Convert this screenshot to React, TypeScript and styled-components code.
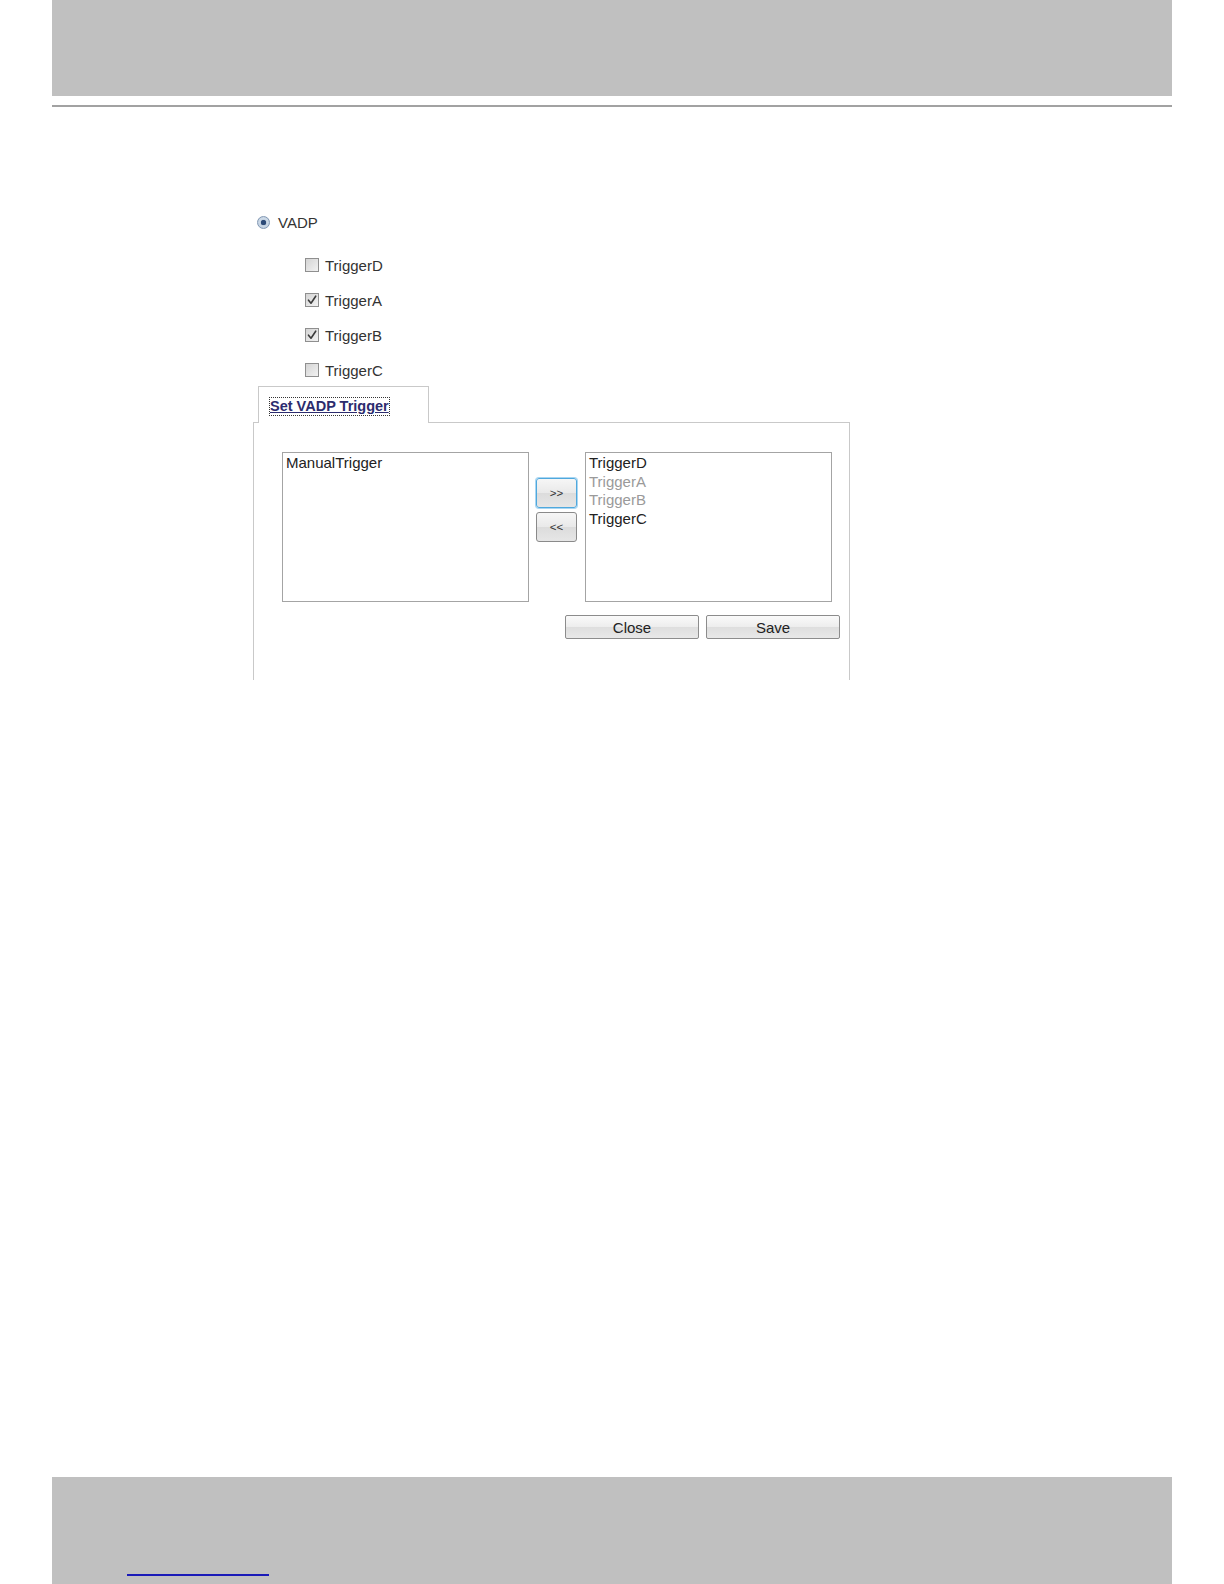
import React from "react";
import styled, { createGlobalStyle } from "styled-components";

const Global = createGlobalStyle`
  html, body { margin: 0; padding: 0; background: #ffffff; }
  body { font-family: "Liberation Sans", Arial, sans-serif; }
`;

const Page = styled.div`
  width: 1224px;
  height: 1584px;
  display: flex;
  flex-direction: column;
  position: relative;
`;

const HeaderBand = styled.div`
  margin: 0 52px;
  height: 96px;
  background: #c0c0c0;
`;

const Rule = styled.div`
  margin: 9px 52px 0;
  height: 2px;
  background: #a2a2a2;
`;

const Content = styled.div`
  padding-left: 256px;
  margin-top: 105px;
  display: flex;
  flex-direction: column;
`;

const OptionRow = styled.label<{ $indent?: number }>`
  display: flex;
  align-items: center;
  height: 20px;
  gap: 6px;
  padding-left: ${(p) => p.$indent ?? 0}px;
  font-size: 15px;
  color: #333;
`;

const RadioDot = styled.span`
  width: 13px;
  height: 13px;
  border-radius: 50%;
  box-sizing: border-box;
  border: 1px solid #8298b4;
  background: radial-gradient(circle at 50% 45%, #e2ecf6 0%, #b4c5d8 100%);
  display: flex;
  align-items: center;
  justify-content: center;
  margin-left: 1px;
  margin-right: 2px;
  &::after {
    content: "";
    width: 5px;
    height: 5px;
    border-radius: 50%;
    background: #2c4a78;
    box-shadow: 0 0 1px #1b3560;
  }
`;

const CheckList = styled.div`
  display: flex;
  flex-direction: column;
  gap: 15px;
  margin-top: 23px;
`;

const CheckBox = styled.span`
  width: 14px;
  height: 14px;
  box-sizing: border-box;
  border: 1px solid #8f8f8f;
  background: linear-gradient(135deg, #d4d4d4 0%, #f2f2f2 100%);
  display: flex;
  align-items: center;
  justify-content: center;
`;

const TabStrip = styled.div`
  margin-top: 6px;
  margin-left: -3px;
  display: flex;
  flex-direction: column;
`;

const Tab = styled.div`
  margin-left: 5px;
  width: 171px;
  height: 37px;
  box-sizing: border-box;
  border: 1px solid #c9c9c9;
  border-bottom: none;
  background: #fff;
  margin-bottom: -1px;
  position: relative;
  z-index: 1;
  padding: 10px 0 0 11px;
`;

const TabLabel = styled.span`
  font-size: 14.5px;
  font-weight: bold;
  color: #2c2c6e;
  text-decoration: underline;
  outline: 1px dotted #333;
  outline-offset: 0px;
  line-height: 17px;
  display: inline-block;
`;

const Panel = styled.div`
  width: 597px;
  height: 258px;
  box-sizing: border-box;
  border: 1px solid #c9c9c9;
  border-bottom: none;
  padding: 29px 0 0 28px;
  display: flex;
  flex-direction: column;
`;

const ListRow = styled.div`
  display: flex;
  align-items: flex-start;
`;

const ListBox = styled.div`
  width: 247px;
  height: 150px;
  box-sizing: border-box;
  border: 1px solid #a4a4a4;
  background: #fff;
  padding: 1px 3px;
  display: flex;
  flex-direction: column;
`;

const ListItem = styled.div<{ $disabled?: boolean }>`
  font-size: 15px;
  line-height: 18.6px;
  color: ${(p) => (p.$disabled ? "#9a9a9a" : "#222")};
  white-space: nowrap;
`;

const MoveColumn = styled.div`
  display: flex;
  flex-direction: column;
  gap: 4px;
  margin: 26px 8px 0 7px;
`;

const MoveButton = styled.button<{ $focused?: boolean }>`
  width: 41px;
  height: 30px;
  box-sizing: border-box;
  border-radius: 3px;
  border: 1px solid ${(p) => (p.$focused ? "#4fa8dd" : "#8a8a8a")};
  box-shadow: ${(p) => (p.$focused ? "0 0 0 1px #a9d6f2" : "none")};
  background: linear-gradient(#f6f6f6 0%, #e9e9e9 50%, #dcdcdc 51%, #e6e6e6 100%);
  font-family: "Liberation Sans", Arial, sans-serif;
  font-size: 11.5px;
  color: #333;
  padding: 0;
  display: flex;
  align-items: center;
  justify-content: center;
`;

const ActionRow = styled.div`
  display: flex;
  gap: 7px;
  margin-top: 13px;
  padding-left: 283px;
`;

const ActionButton = styled.button`
  width: 134px;
  height: 24px;
  box-sizing: border-box;
  border: 1px solid #8c8c8c;
  border-radius: 2px;
  background: linear-gradient(#fafafa 0%, #ededed 50%, #dedede 51%, #e8e8e8 100%);
  font-family: "Liberation Sans", Arial, sans-serif;
  font-size: 15px;
  color: #222;
  padding: 0;
`;

const Spacer = styled.div`
  flex: 1;
`;

const FooterBand = styled.div`
  margin: 0 52px;
  height: 107px;
  background: #c0c0c0;
  display: flex;
  align-items: flex-end;
  padding: 0 0 8px 75px;
  box-sizing: border-box;
`;

const FooterUnderline = styled.span`
  display: block;
  width: 142px;
  height: 2px;
  background: #1a1ab8;
`;

const Check = () => (
  <svg width="10" height="10" viewBox="0 0 10 10">
    <path d="M1.5 5.2 L4 8.2 L8.7 1.2" fill="none" stroke="#3b3b3b" strokeWidth="1.6" strokeLinejoin="round" strokeLinecap="round" />
  </svg>
);

const triggers: { name: string; checked: boolean }[] = [
  { name: "TriggerD", checked: false },
  { name: "TriggerA", checked: true },
  { name: "TriggerB", checked: true },
  { name: "TriggerC", checked: false },
];

export default function App() {
  return (
    <Page>
      <Global />
      <HeaderBand />
      <Rule />
      <Content>
        <OptionRow>
          <RadioDot />
          VADP
        </OptionRow>
        <CheckList>
          {triggers.map((t) => (
            <OptionRow key={t.name} $indent={49}>
              <CheckBox>{t.checked && <Check />}</CheckBox>
              {t.name}
            </OptionRow>
          ))}
        </CheckList>
        <TabStrip>
          <Tab>
            <TabLabel>Set VADP Trigger</TabLabel>
          </Tab>
          <Panel>
            <ListRow>
              <ListBox>
                <ListItem>ManualTrigger</ListItem>
              </ListBox>
              <MoveColumn>
                <MoveButton $focused>&gt;&gt;</MoveButton>
                <MoveButton>&lt;&lt;</MoveButton>
              </MoveColumn>
              <ListBox>
                <ListItem>TriggerD</ListItem>
                <ListItem $disabled>TriggerA</ListItem>
                <ListItem $disabled>TriggerB</ListItem>
                <ListItem>TriggerC</ListItem>
              </ListBox>
            </ListRow>
            <ActionRow>
              <ActionButton>Close</ActionButton>
              <ActionButton>Save</ActionButton>
            </ActionRow>
          </Panel>
        </TabStrip>
      </Content>
      <Spacer />
      <FooterBand>
        <FooterUnderline />
      </FooterBand>
    </Page>
  );
}
